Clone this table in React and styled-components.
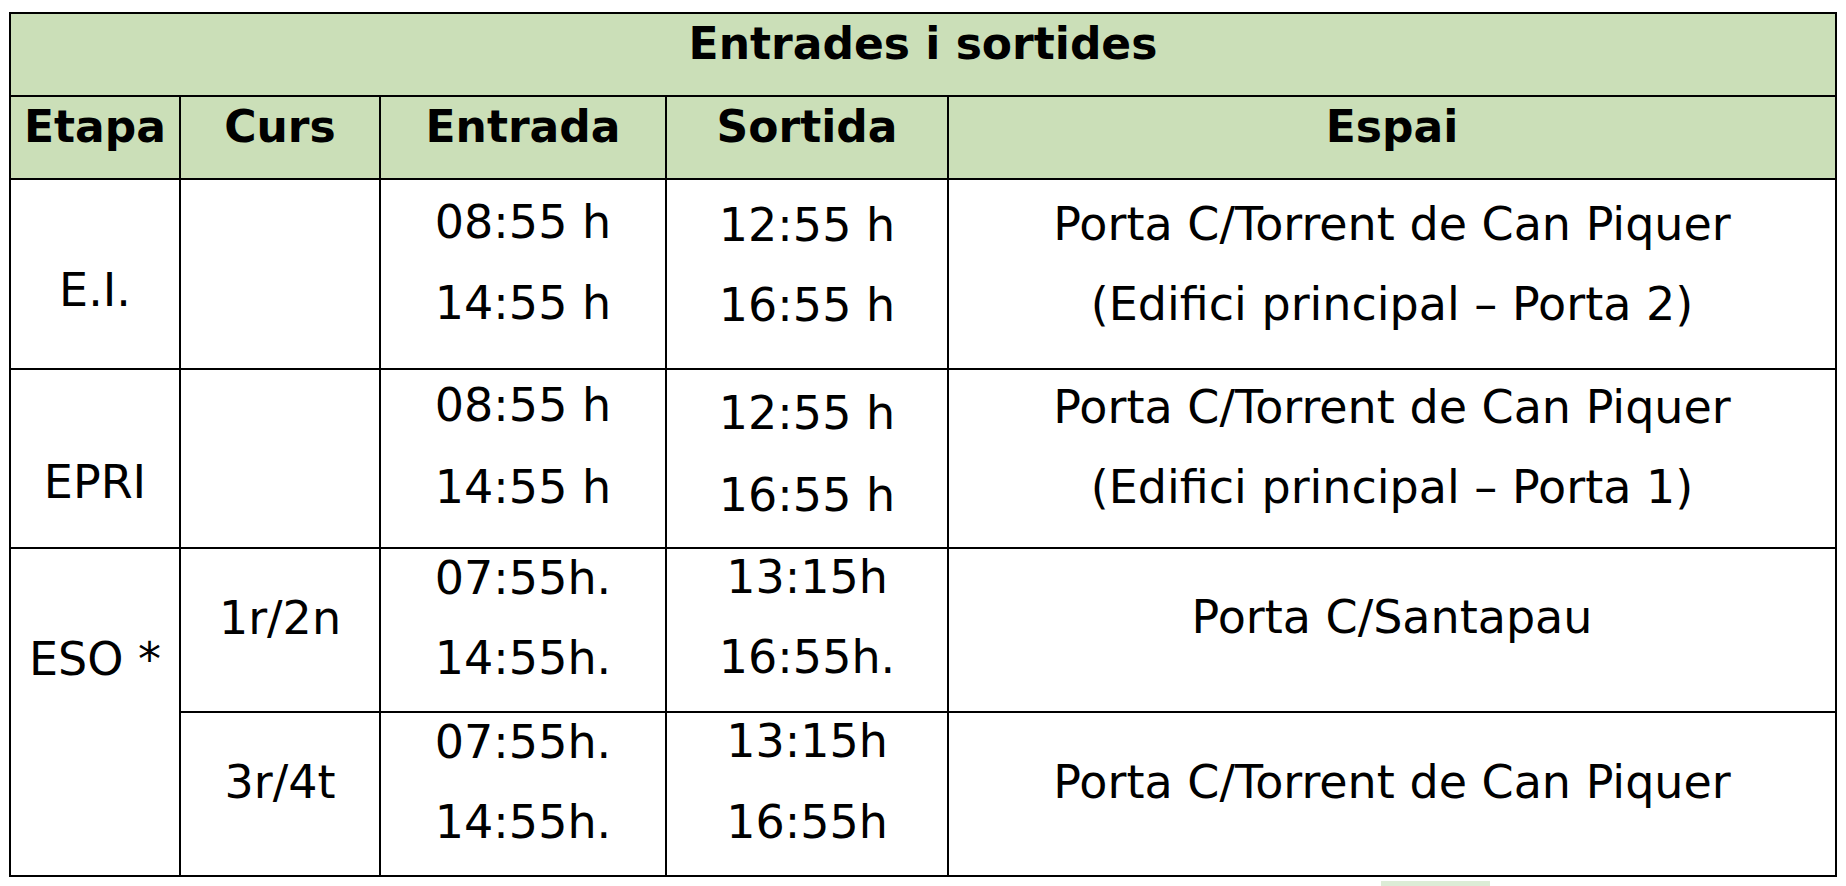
import React from "react";
import styled, { createGlobalStyle } from "styled-components";

const Global = createGlobalStyle`
  html, body { margin: 0; padding: 0; background: #ffffff; }
  body { font-family: "DejaVu Sans", Verdana, sans-serif; color: #000; }
`;

const Page = styled.div`
  display: flex;
  flex-direction: column;
  align-items: flex-start;
  padding: 12px 0 0 9px;
  width: 1846px;
  height: 886px;
  box-sizing: border-box;
  overflow: hidden;
`;

const Table = styled.div`
  display: grid;
  grid-template-columns: 168px 198px 284px 280px 886px;
  grid-template-rows: 81px 81px 188px 177px 162px 162px;
  gap: 2px;
  padding: 2px;
  background: #000;
`;

const HeadCell = styled.div`
  grid-column: ${(p) => (p.$full ? "1 / -1" : "auto")};
  background: #cbdfb8;
  display: flex;
  justify-content: center;
  align-items: flex-start;
  padding-top: 5px;
  box-sizing: border-box;
  font-family: "DejaVu Sans", Verdana, sans-serif;
  font-weight: 700;
  font-size: 44px;
  line-height: 50px;
  white-space: nowrap;
`;

const Cell = styled.div`
  grid-row: ${(p) => (p.$rows ? `span ${p.$rows}` : "auto")};
  background: #ffffff;
  display: flex;
  flex-direction: column;
  align-items: center;
  gap: ${(p) => p.$gap ?? 27}px;
  padding-top: ${(p) => p.$pad ?? 0}px;
  box-sizing: border-box;
  font-family: "DejaVu Sans", Verdana, sans-serif;
  font-size: 46px;
  line-height: 53px;
  white-space: nowrap;
`;

const Line = styled.span`
  display: block;
`;

const Mark = styled.div`
  margin-top: 4px;
  margin-left: 1372px;
  width: 109px;
  height: 6px;
  background: #dcecd6;
`;

const rows = [
  {
    etapa: { text: "E.I.", pad: 84 },
    curs: null,
    entrada: { lines: ["08:55 h", "14:55 h"], pad: 16, gap: 27.5 },
    sortida: { lines: ["12:55 h", "16:55 h"], pad: 19, gap: 27 },
    espai: {
      lines: ["Porta C/Torrent de Can Piquer", "(Edifici principal – Porta 2)"],
      pad: 18,
      gap: 27,
    },
  },
  {
    etapa: { text: "EPRI", pad: 86 },
    curs: null,
    entrada: { lines: ["08:55 h", "14:55 h"], pad: 9, gap: 29 },
    sortida: { lines: ["12:55 h", "16:55 h"], pad: 17, gap: 28.5 },
    espai: {
      lines: ["Porta C/Torrent de Can Piquer", "(Edifici principal – Porta 1)"],
      pad: 11,
      gap: 27,
    },
  },
  {
    etapa: { text: "ESO *", pad: 84, rows: 2 },
    curs: { text: "1r/2n", pad: 43 },
    entrada: { lines: ["07:55h.", "14:55h."], pad: 3, gap: 27 },
    sortida: { lines: ["13:15h", "16:55h."], pad: 2, gap: 27 },
    espai: { lines: ["Porta C/Santapau"], pad: 42 },
  },
  {
    curs: { text: "3r/4t", pad: 43 },
    entrada: { lines: ["07:55h.", "14:55h."], pad: 3, gap: 27 },
    sortida: { lines: ["13:15h", "16:55h"], pad: 2, gap: 28 },
    espai: { lines: ["Porta C/Torrent de Can Piquer"], pad: 43 },
  },
];

const Multi = ({ data }) => (
  <Cell $pad={data.pad} $gap={data.gap}>
    {data.lines.map((l, i) => (
      <Line key={i}>{l}</Line>
    ))}
  </Cell>
);

export default function App() {
  return (
    <>
      <Global />
      <Page>
        <Table>
          <HeadCell $full>Entrades i sortides</HeadCell>
          <HeadCell>Etapa</HeadCell>
          <HeadCell>Curs</HeadCell>
          <HeadCell>Entrada</HeadCell>
          <HeadCell>Sortida</HeadCell>
          <HeadCell>Espai</HeadCell>
          {rows.map((r, i) => (
            <React.Fragment key={i}>
              {r.etapa && (
                <Cell $pad={r.etapa.pad} $rows={r.etapa.rows}>
                  <Line>{r.etapa.text}</Line>
                </Cell>
              )}
              <Cell $pad={r.curs ? r.curs.pad : 0}>
                {r.curs && <Line>{r.curs.text}</Line>}
              </Cell>
              <Multi data={r.entrada} />
              <Multi data={r.sortida} />
              <Multi data={r.espai} />
            </React.Fragment>
          ))}
        </Table>
        <Mark />
      </Page>
    </>
  );
}
